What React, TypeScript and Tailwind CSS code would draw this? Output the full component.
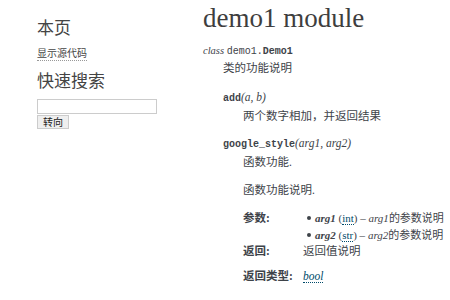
const serif = "font-['Liberation_Serif','Noto_Sans_CJK_SC',serif]";

function TypeLink({ children, italic }: { children: string; italic?: boolean }) {
  return (
    <span className={`border-b border-dotted border-[#004b6b] text-[#004b6b] ${italic ? "italic" : ""}`}>
      {children}
    </span>
  );
}

function Sidebar() {
  return (
    <aside className="w-[203px] shrink-0 pl-[37px] font-['Noto_Sans_CJK_SC',sans-serif] text-[#444]">
      <h3 className="mt-[16px] text-[17px] leading-[22px]">本页</h3>
      <div className="mt-[8px] text-[10px] leading-[14px]">
        <span className="border-b border-dotted border-[#999]">显示源代码</span>
      </div>
      <h3 className="mt-[9px] text-[17px] leading-[22px]">快速搜索</h3>
      <div className="mt-[8px] flex flex-col items-start">
        <input className="h-[15px] w-[120px] border border-[#ccc] bg-white" />
        <button className="mt-[1px] h-[14px] w-[32px] border border-[#ccc] bg-[#efefef] text-[10px] leading-[12px] text-[#222]">
          转向
        </button>
      </div>
    </aside>
  );
}

export default function App() {
  return (
    <div className="flex h-[300px] w-[450px] overflow-hidden bg-white text-[#3e4349]">
      <Sidebar />
      <main className={`flex-1 ${serif} text-[11.5px]`}>
        <h1 className="mt-[3px] text-[27px] leading-[30px] text-[#3e3e3e]">demo1 module</h1>

        <div className="mt-[9px] leading-[16px]">
          <em className="text-[10.5px]">class </em>
          <span className="font-['Liberation_Mono',monospace] text-[10px]">
            demo1.<b>Demo1</b>
          </span>
        </div>
        <div className="pl-[20px] leading-[16px]">类的功能说明</div>

        <div className="mt-[13px] pl-[20px] leading-[16px]">
          <span className="font-['Liberation_Mono',monospace] text-[10px] font-bold">add</span>
          <span className="italic">(a, b)</span>
        </div>
        <div className="mt-[1px] pl-[40px] leading-[16px]">两个数字相加，并返回结果</div>

        <div className="mt-[11px] pl-[20px] leading-[16px]">
          <span className="font-['Liberation_Mono',monospace] text-[10px] font-bold">google_style</span>
          <span className="italic">(arg1, arg2)</span>
        </div>
        <div className="mt-[1px] pl-[40px] leading-[16px]">函数功能.</div>
        <div className="mt-[12px] pl-[40px] leading-[16px]">函数功能说明.</div>

        <div className="mt-[12px] grid grid-cols-[60px_1fr] pl-[40px] leading-[16px]">
          <div className="font-bold">参数:</div>
          <ul className="flex flex-col gap-[1px] text-[11px]">
            <li className="flex items-center">
              <span className="mx-[4px] inline-block h-[4px] w-[4px] rounded-full bg-[#3e4349]" />
              <span className="whitespace-nowrap">
                <b className="italic">arg1</b> (<TypeLink>int</TypeLink>) – <em>arg1</em>的参数说明
              </span>
            </li>
            <li className="flex items-center">
              <span className="mx-[4px] inline-block h-[4px] w-[4px] rounded-full bg-[#3e4349]" />
              <span className="whitespace-nowrap">
                <b className="italic">arg2</b> (<TypeLink>str</TypeLink>) – <em>arg2</em>的参数说明
              </span>
            </li>
          </ul>
          <div className="font-bold">返回:</div>
          <div>返回值说明</div>
          <div className="mt-[9px] font-bold">返回类型:</div>
          <div className="mt-[9px]">
            <TypeLink italic>bool</TypeLink>
          </div>
        </div>
      </main>
    </div>
  );
}
